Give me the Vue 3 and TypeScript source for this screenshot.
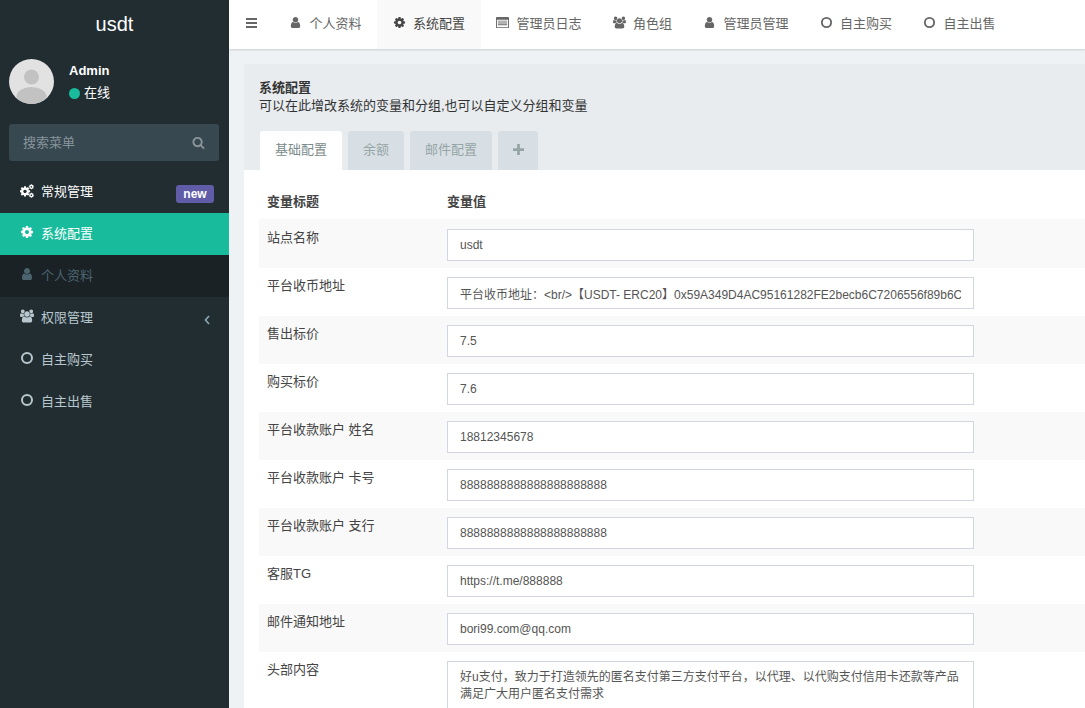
<script setup lang="ts">
const COG = 'M1152 896q0-106-75-181t-181-75-181 75-75 181 75 181 181 75 181-75 75-181zm512-109v222q0 12-8 23t-20 13l-185 28q-19 54-39 91 35 50 107 138 10 12 10 25t-9 23q-27 37-99 108t-94 71q-12 0-26-9l-138-108q-44 23-91 38-16 136-29 186-7 28-36 28h-222q-14 0-24.500-8.500t-11.500-21.500l-28-184q-49-16-90-37l-141 107q-10 9-25 9-14 0-25-11-126-114-165-168-7-10-7-23 0-12 8-23 15-21 51-66.500t54-70.500q-27-50-41-99l-183-27q-13-2-21-12.500t-8-23.500v-222q0-12 8-23t19-13l186-28q14-46 39-92-40-57-107-138-10-12-10-24 0-10 9-23 26-36 98.500-107.500t94.500-71.500q13 0 26 10l138 107q44-23 91-38 16-136 29-186 7-28 36-28h222q14 0 24.500 8.500t11.500 21.500l28 184q49 16 90 37l142-107q9-9 24-9 13 0 25 10 129 119 165 170 7 8 7 22 0 12-8 23-15 21-51 66.500t-54 70.500q26 50 41 98l183 28q13 2 21 12.500t8 23.500z'
const USER = 'M1536 1399q0 109-62.500 187t-150.500 78h-854q-88 0-150.500-78t-62.500-187q0-85 8.500-160.500t31.500-152 58.500-131 94-89 134.500-34.500q131 128 313 128t313-128q76 0 134.500 34.500t94 89 58.500 131 31.500 152 8.500 160.500zm-256-887q0 159-112.500 271.500t-271.500 112.500-271.500-112.500-112.500-271.500 112.500-271.500 271.500-112.500 271.500 112.500 112.500 271.500z'
const USERS = 'M593 896q-162 5-265 128h-134q-82 0-138-40.500t-56-118.500q0-353 124-353 6 0 43.500 21t97.500 42.500 119 21.500q67 0 133-23-5 37-5 66 0 139 81 256zm1071 637q0 120-73 189.500t-194 69.500h-874q-121 0-194-69.500t-73-189.500q0-53 3.500-103.500t14-109 26.500-108.500 43-97.500 62-81 85.500-53.500 111.500-20q10 0 43 21.500t73 48 107 48 135 21.500 135-21.500 107-48 73-48 43-21.500q61 0 111.500 20t85.500 53.500 62 81 43 97.500 26.500 108.500 14 109 3.500 103.500zm-1024-1277q0 106-75 181t-181 75-181-75-75-181 75-181 181-75 181 75 75 181zm704 384q0 159-112.500 271.500t-271.500 112.500-271.500-112.500-112.500-271.500 112.500-271.500 271.500-112.500 271.500 112.500 112.500 271.500zm576 225q0 78-56 118.500t-138 40.500h-134q-103-123-265-128 81-117 81-256 0-29-5-66 66 23 133 23 59 0 119-21.500t97.500-42.500 43.500-21q124 0 124 353zm-128-609q0 106-75 181t-181 75-181-75-75-181 75-181 181-75 181 75 75 181z'
const SEARCH = 'M1216 832q0-185-131.500-316.500t-316.500-131.500-316.500 131.500-131.500 316.500 131.500 316.500 316.500 131.500 316.500-131.500 131.500-316.500zm512 832q0 52-38 90t-90 38q-54 0-90-38l-343-342q-179 124-399 124-143 0-273.500-55.500t-225-150-150-225-55.500-273.500 55.500-273.500 150-225 225-150 273.500-55.500 273.500 55.500 225 150 150 225 55.500 273.500q0 220-124 399l343 343q37 37 37 90z'

interface Tab { icon: string; label: string; active?: boolean }
const tabs: Tab[] = [
  { icon: 'user', label: '个人资料' },
  { icon: 'cog', label: '系统配置', active: true },
  { icon: 'list', label: '管理员日志' },
  { icon: 'users', label: '角色组' },
  { icon: 'user', label: '管理员管理' },
  { icon: 'circle', label: '自主购买' },
  { icon: 'circle', label: '自主出售' },
]

interface Row { title: string; value: string }
const rows: Row[] = [
  { title: '站点名称', value: 'usdt' },
  { title: '平台收币地址', value: '平台收币地址：<br/>【USDT- ERC20】0x59A349D4AC95161282FE2becb6C7206556f89b6C' },
  { title: '售出标价', value: '7.5' },
  { title: '购买标价', value: '7.6' },
  { title: '平台收款账户 姓名', value: '18812345678' },
  { title: '平台收款账户 卡号', value: '8888888888888888888888' },
  { title: '平台收款账户 支行', value: '8888888888888888888888' },
  { title: '客服TG', value: 'https://t.me/888888' },
  { title: '邮件通知地址', value: 'bori99.com@qq.com' },
]
const headText = '好u支付，致力于打造领先的匿名支付第三方支付平台，以代理、以代购支付信用卡还款等产品满足广大用户匿名支付需求'
</script>

<template>
  <div class="page">
    <aside class="sidebar">
      <div class="logo">usdt</div>
      <div class="user-panel">
        <svg class="avatar" viewBox="0 0 45 45">
          <defs><clipPath id="av"><circle cx="22.500" cy="22.500" r="22.500" /></clipPath></defs>
          <circle cx="22.500" cy="22.500" r="22.500" fill="#e2e2e2" />
          <g clip-path="url(#av)" fill="#c2c2c2">
            <circle cx="22.500" cy="18" r="7.500" />
            <ellipse cx="22.500" cy="37.500" rx="15" ry="9.500" />
          </g>
        </svg>
        <div class="user-info">
          <div class="user-name">Admin</div>
          <div class="user-status"><span class="dot"></span>在线</div>
        </div>
      </div>
      <div class="search">
        <input class="search-input" placeholder="搜索菜单" />
        <svg class="search-icon" viewBox="0 0 1792 1792"><path :d="SEARCH" /></svg>
      </div>
      <nav class="menu">
        <a class="item item-top">
          <svg class="mi" viewBox="0 0 1792 1792">
            <g transform="translate(-130 170) scale(.86)"><path :d="COG" /></g>
            <g transform="translate(1080 -20) scale(.42)"><path :d="COG" /></g>
            <g transform="translate(1080 1060) scale(.42)"><path :d="COG" /></g>
          </svg>
          <span>常规管理</span>
          <span class="badge">new</span>
        </a>
        <a class="item item-active">
          <svg class="mi" viewBox="0 0 1792 1792"><path :d="COG" /></svg>
          <span>系统配置</span>
        </a>
        <a class="item item-sub">
          <svg class="mi" viewBox="0 0 1792 1792"><path :d="USER" /></svg>
          <span>个人资料</span>
        </a>
        <a class="item">
          <svg class="mi" viewBox="0 0 1920 1792"><path :d="USERS" /></svg>
          <span>权限管理</span>
          <svg class="chev" viewBox="0 0 8 12"><path d="M6 2 2.500 6 6 10" fill="none" stroke="currentColor" stroke-width="1.700" /></svg>
        </a>
        <a class="item">
          <svg class="mi" viewBox="0 0 14 14"><circle cx="7" cy="7" r="5" fill="none" stroke="currentColor" stroke-width="2" /></svg>
          <span>自主购买</span>
        </a>
        <a class="item">
          <svg class="mi" viewBox="0 0 14 14"><circle cx="7" cy="7" r="5" fill="none" stroke="currentColor" stroke-width="2" /></svg>
          <span>自主出售</span>
        </a>
      </nav>
    </aside>

    <div class="main">
      <header class="topbar">
        <a class="burger"><span></span><span></span><span></span></a>
        <a v-for="t in tabs" :key="t.label" class="tab" :class="{ 'tab-active': t.active }">
          <span class="tab-icon">
            <svg v-if="t.icon === 'user'" viewBox="0 0 1792 1792"><path :d="USER" /></svg>
            <svg v-else-if="t.icon === 'cog'" viewBox="0 0 1792 1792"><path :d="COG" /></svg>
            <svg v-else-if="t.icon === 'users'" viewBox="0 0 1920 1792"><path :d="USERS" /></svg>
            <svg v-else-if="t.icon === 'list'" viewBox="0 0 14 12">
              <path fill-rule="evenodd" d="M1 0h12a1 1 0 0 1 1 1v10a1 1 0 0 1-1 1H1a1 1 0 0 1-1-1V1a1 1 0 0 1 1-1zM1 3v8h12V3zM2 4h10v1H2zM2 6h10v1H2zM2 8h10v1H2z" />
            </svg>
            <svg v-else viewBox="0 0 14 14"><circle cx="7" cy="7" r="5" fill="none" stroke="currentColor" stroke-width="2" /></svg>
          </span>{{ t.label }}
        </a>
      </header>

      <main class="content">
        <section class="panel">
          <div class="panel-head">
            <div class="head-title">系统配置</div>
            <div class="head-sub">可以在此增改系统的变量和分组,也可以自定义分组和变量</div>
            <div class="ptabs">
              <a class="ptab ptab-active">基础配置</a>
              <a class="ptab">余额</a>
              <a class="ptab">邮件配置</a>
              <a class="ptab ptab-plus">
                <svg viewBox="0 0 12 12"><path d="M4.500 0h3v4.500H12v3H7.500V12h-3V7.500H0v-3h4.500z" /></svg>
              </a>
            </div>
          </div>
          <div class="panel-body">
            <div class="thead">
              <div class="c1">变量标题</div>
              <div>变量值</div>
            </div>
            <div v-for="r in rows" :key="r.title" class="row">
              <div class="c1 label">{{ r.title }}</div>
              <input class="field" :value="r.value" />
            </div>
            <div class="row">
              <div class="c1 label">头部内容</div>
              <textarea class="field area" :value="headText"></textarea>
            </div>
          </div>
        </section>
      </main>
    </div>
  </div>
</template>

<style>
html, body { margin: 0; height: 100%; overflow: hidden; }
</style>

<style scoped>
.page {
  display: flex;
  width: 1085px;
  height: 708px;
  overflow: hidden;
  font-family: "Liberation Sans", "Noto Sans CJK SC", sans-serif;
  font-size: 13px;
  color: #333;
  background: #eef2f5;
}
a { display: flex; text-decoration: none; }

.sidebar { width: 229px; flex: none; background: #222d32; color: #b8c7ce; }
.logo { height: 50px; line-height: 48px; text-align: center; font-size: 20px; color: #fff; }
.user-panel { display: flex; align-items: center; padding: 9px 0 0 9px; height: 45px; gap: 15px; }
.avatar { width: 45px; height: 45px; flex: none; }
.user-info { padding-top: 2px; }
.user-name { font-weight: 700; color: #fff; line-height: 18px; margin-top: -1px; }
.user-status { display: flex; align-items: center; color: #fff; line-height: 18px; margin-top: 4px; }
.dot { width: 11px; height: 11px; border-radius: 50%; background: #18bc9c; margin-right: 4px; }

.search { position: relative; margin: 20px 10px 0 9px; height: 37px; }
.search-input {
  box-sizing: border-box; width: 100%; height: 100%;
  border: 0; border-radius: 3px; outline: 0;
  padding: 0 40px 0 14px;
  background: #374850; color: #ccc; font: inherit;
}
.search-input::placeholder { color: #87949b; opacity: 1; }
.search-icon { position: absolute; right: 14px; top: 12px; width: 13px; height: 13px; fill: #8a9499; }

.menu { margin-top: 9px; }
.item { align-items: center; box-sizing: border-box; height: 42px; padding: 0 15px 4px 20px; color: #b8c7ce; position: relative; }
.mi { width: 14px; height: 14px; margin-right: 7px; flex: none; fill: currentColor; }
.item-top { color: #fff; height: 43px; padding-bottom: 2px; }
.item-active { background: #18bc9c; color: #fff; }
.item-sub { background: #1a2226; color: #4b646f; }
.badge {
  position: absolute; left: 176px; top: 15px;
  width: 38px; height: 18px; line-height: 18px; text-align: center;
  border-radius: 3px; background: #605ca8; color: #fff;
  font-size: 12px; font-weight: 700;
}
.chev { position: absolute; left: 203px; top: 17px; width: 8px; height: 12px; color: #8aa4af; }

.main { flex: 1; min-width: 0; display: flex; flex-direction: column; }
.topbar {
  display: flex; height: 49px; flex: none; background: #fff;
  box-shadow: 0 1px 2px rgba(0, 0, 0, .15);
  position: relative; z-index: 1;
  color: #666;
}
.burger {
  flex-direction: column; justify-content: center; gap: 2px;
  width: 44.500px; box-sizing: border-box; padding: 0 0 3px 17px;
}
.burger span { display: block; width: 11px; height: 2px; background: #666; }
.tab { align-items: center; box-sizing: border-box; padding: 0 15.500px 4px; color: #666; height: 49px; white-space: nowrap; }
.tab-active { background: #f9f9f9; color: #444; }
.tab-icon { width: 20.500px; flex: none; display: flex; align-items: center; }
.tab-icon svg { width: 13px; height: 13px; fill: currentColor; }

.content { flex: 1; padding: 15px 0 0 15px; min-height: 0; }
.panel { background: #fff; height: 100%; }
.panel-head { background: #e8ecef; padding: 14px 0 0 15px; height: 92px; }
.head-title { font-weight: 700; line-height: 19px; color: #333; }
.head-sub { line-height: 18px; color: #333; }
.ptabs { display: flex; gap: 6px; margin-top: 16px; margin-left: 1px; }
.ptab {
  height: 39px; line-height: 37px; padding: 0 15px;
  background: #d8dfe4; color: #95a5a6;
  border-radius: 3px 3px 0 0;
  justify-content: center;
}
.ptab-active { background: #fff; color: #7b8a8b; }
.ptab-plus { align-items: center; width: 10px; padding-bottom: 3px; height: 36px; }
.ptab-plus svg { width: 11px; height: 11px; fill: #95a5a6; flex: none; }

.panel-body { padding-left: 15px; }
.thead {
  display: flex; height: 49px; box-sizing: border-box; align-items: center;
  font-weight: 700; color: #444; padding-top: 12px;
}
.c1 { width: 188px; flex: none; padding-left: 8px; box-sizing: border-box; }
.row {
  display: flex; box-sizing: border-box; height: 48px; padding-top: 9px;
  border-top: 1px solid transparent;
}
.thead + .row { height: 49px; padding-top: 10px; }
.row:nth-of-type(even) { background: #f9f9f9; }
.label { color: #444; line-height: 18px; margin-top: -1px; }
.field {
  box-sizing: border-box; width: 527px; height: 32px; flex: none;
  border: 1px solid #d2d6de; border-radius: 0; outline: 0;
  padding: 0 12px; margin: 0; background: #fff;
  color: #555; font: inherit; font-size: 12px;
  margin-top: -1px;
}
.area { height: 80px; padding: 7px 12px; line-height: 17px; resize: none; overflow: hidden; }
</style>
